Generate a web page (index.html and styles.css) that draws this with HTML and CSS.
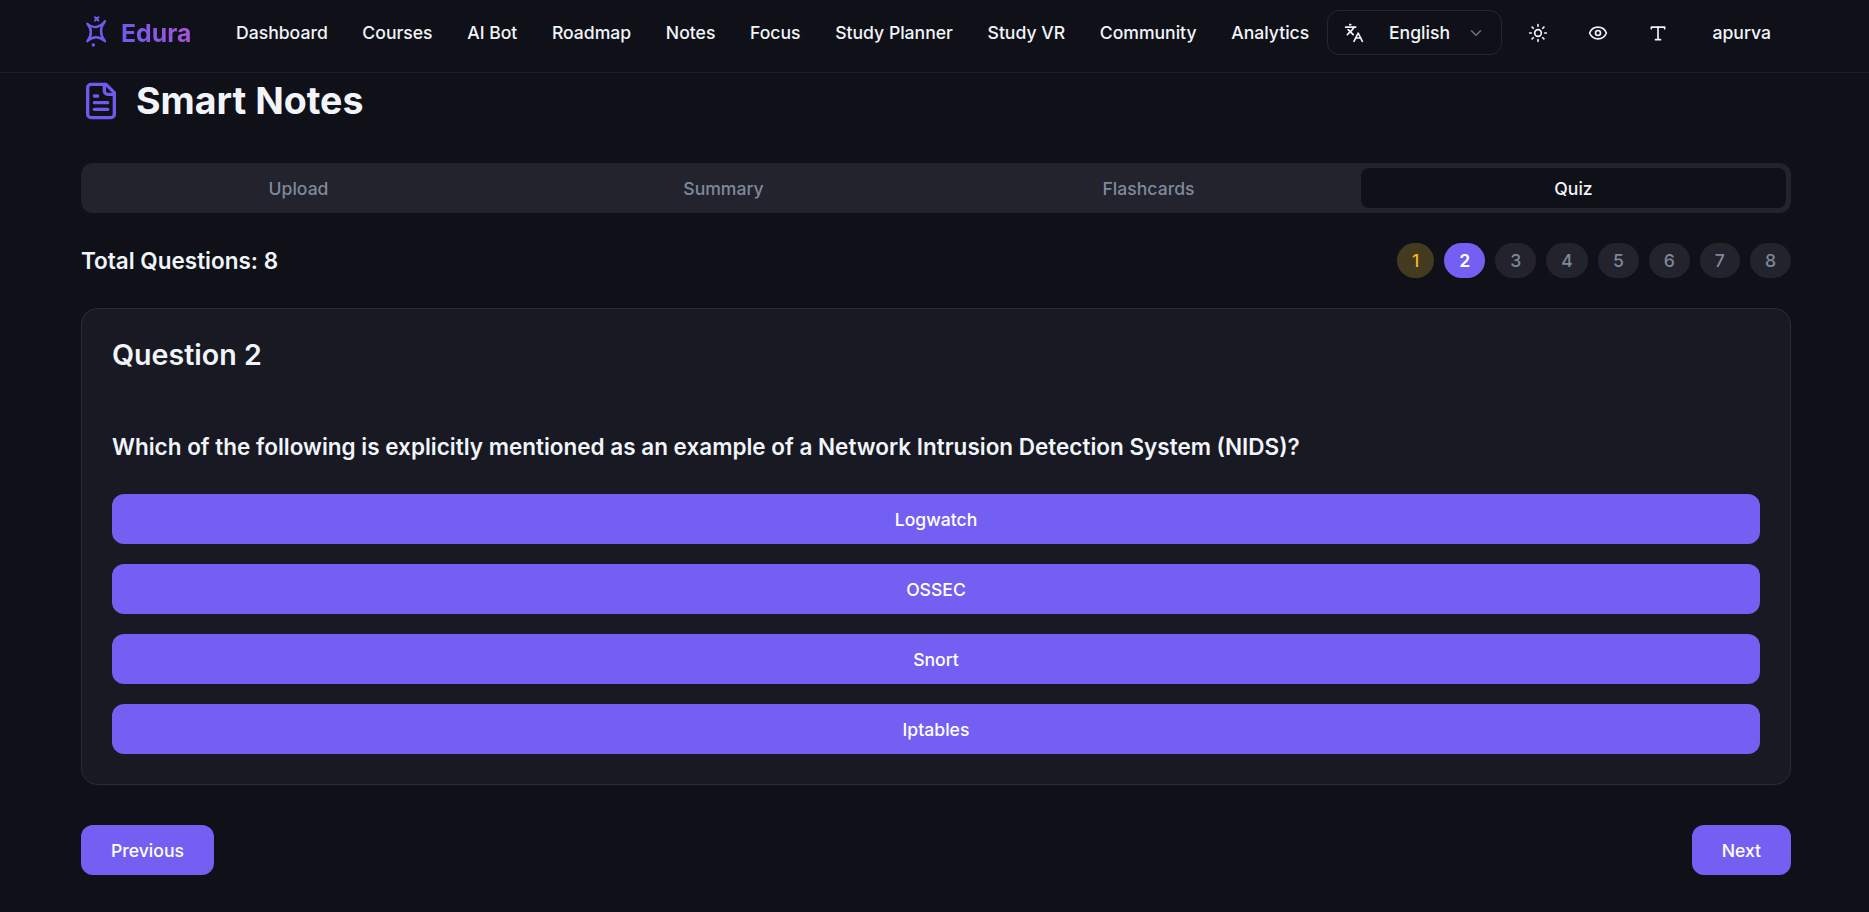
FILE: index.html
```html
<!DOCTYPE html>
<html lang="en">
<head>
<meta charset="utf-8">
<title>Smart Notes</title>
<link rel="stylesheet" href="styles.css">
</head>
<body>
<header class="nav">
  <div class="brand">
    <svg class="brand-icon" viewBox="0 0 24 34" width="24" height="34" fill="none" stroke="#6d5bf0" stroke-width="2.400" stroke-linecap="round" stroke-linejoin="round">
      <path d="M3.300 7.800 Q12 15.500 21 5.200 Q13 15 21 25.200 Q12 17.500 3.300 25.200 Q10.500 16 3.300 7.800 Z"/>
      <path d="M11 1.200 L14.400 4.600 M14.400 1.200 L11 4.600" stroke-width="2"/>
      <circle cx="9.300" cy="29" r="1.700" fill="#6d5bf0" stroke="none"/>
    </svg>
    <span class="brand-name">Edura</span>
  </div>
  <nav class="links">
    <a>Dashboard</a><a>Courses</a><a>AI Bot</a><a>Roadmap</a><a>Notes</a><a>Focus</a><a>Study Planner</a><a>Study VR</a><a>Community</a><a>Analytics</a>
  </nav>
  <div class="tools">
    <div class="lang">
      <svg viewBox="0 0 24 24" width="20" height="20" fill="none" stroke="#f1f5f9" stroke-width="2" stroke-linecap="round" stroke-linejoin="round"><path d="m5 8 6 6"/><path d="m4 14 6-6 2-3"/><path d="M2 5h12"/><path d="M7 2h1"/><path d="m22 22-5-10-5 10"/><path d="M14 18h6"/></svg>
      <span class="lang-name">English</span>
      <svg viewBox="0 0 24 24" width="18" height="18" fill="none" stroke="#6b7280" stroke-width="2" stroke-linecap="round" stroke-linejoin="round"><path d="m6 9 6 6 6-6"/></svg>
    </div>
    <button class="tool">
      <svg viewBox="0 0 24 24" width="20" height="20" fill="none" stroke="#f1f5f9" stroke-width="2" stroke-linecap="round" stroke-linejoin="round"><circle cx="12" cy="12" r="4"/><path d="M12 2v2"/><path d="M12 20v2"/><path d="m4.930 4.930 1.410 1.410"/><path d="m17.660 17.660 1.410 1.410"/><path d="M2 12h2"/><path d="M20 12h2"/><path d="m6.340 17.660-1.410 1.410"/><path d="m19.070 4.930-1.410 1.410"/></svg>
    </button>
    <button class="tool">
      <svg viewBox="0 0 24 24" width="20" height="20" fill="none" stroke="#f1f5f9" stroke-width="2" stroke-linecap="round" stroke-linejoin="round"><path d="M2.060 12.350a1 1 0 0 1 0-.7 10.750 10.750 0 0 1 19.880 0 1 1 0 0 1 0 .7 10.750 10.750 0 0 1-19.880 0"/><circle cx="12" cy="12" r="3"/></svg>
    </button>
    <button class="tool">
      <svg viewBox="0 0 24 24" width="20" height="20" fill="none" stroke="#f1f5f9" stroke-width="2" stroke-linecap="round" stroke-linejoin="round"><path d="M4 7V5h16v2"/><path d="M12 5v14"/><path d="M9 20h6"/></svg>
    </button>
    <span class="user">apurva</span>
  </div>
</header>
<main class="page">
  <div class="title-row">
    <svg viewBox="0 0 24 24" width="40" height="40" fill="none" stroke="#6d5bf0" stroke-width="2" stroke-linecap="round" stroke-linejoin="round"><path d="M15 2H6a2 2 0 0 0-2 2v16a2 2 0 0 0 2 2h12a2 2 0 0 0 2-2V7Z"/><path d="M14 2v4a2 2 0 0 0 2 2h4"/><path d="M10 9H8"/><path d="M16 13H8"/><path d="M16 17H8"/></svg>
    <h1>Smart Notes</h1>
  </div>
  <div class="tabs">
    <div class="tab">Upload</div>
    <div class="tab">Summary</div>
    <div class="tab">Flashcards</div>
    <div class="tab active">Quiz</div>
  </div>
  <div class="progress">
    <div class="total">Total Questions: 8</div>
    <div class="pills">
      <span class="pill answered">1</span>
      <span class="pill current">2</span>
      <span class="pill">3</span>
      <span class="pill">4</span>
      <span class="pill">5</span>
      <span class="pill">6</span>
      <span class="pill">7</span>
      <span class="pill">8</span>
    </div>
  </div>
  <section class="card">
    <h2>Question 2</h2>
    <p class="question">Which of the following is explicitly mentioned as an example of a Network Intrusion Detection System (NIDS)?</p>
    <div class="options">
      <button class="btn option">Logwatch</button>
      <button class="btn option">OSSEC</button>
      <button class="btn option">Snort</button>
      <button class="btn option">Iptables</button>
    </div>
  </section>
  <div class="pager">
    <button class="btn step">Previous</button>
    <button class="btn step">Next</button>
  </div>
</main>
</body>
</html>
```
FILE: styles.css
```css
* { box-sizing: border-box; }
html, body { margin: 0; padding: 0; }
body {
  width: 1869px;
  height: 912px;
  overflow: hidden;
  background: #0f1018;
  color: #f1f5f9;
  font-family: Inter, "Liberation Sans", sans-serif;
}
.nav {
  height: 73px;
  padding: 0 98px 7px 84px;
  display: flex;
  align-items: center;
  border-bottom: 1px solid #1c1d28;
}
.brand { display: flex; align-items: center; gap: 13px; width: 152px; flex: none; }
.brand-icon { flex: none; }
.brand-name {
  font-size: 24.800px;
  font-weight: 700;
  line-height: 32px;
  background: linear-gradient(90deg, #6d5bf0, #a855d8);
  -webkit-background-clip: text;
  background-clip: text;
  color: transparent;
}
.links { display: flex; gap: 34.600px; flex: none; font-size: 17.600px; font-weight: 500; color: #f1f5f9; }
.links a { display: block; line-height: 24px; white-space: nowrap; }
.tools { display: flex; align-items: center; margin-left: auto; }
.lang {
  width: 175px;
  height: 45px;
  padding: 0 16px;
  display: flex;
  align-items: center;
  border: 1px solid #262733;
  border-radius: 12px;
  font-size: 17.600px;
  font-weight: 500;
}
.lang-name { flex: 1; padding-left: 25px; }
.tool {
  width: 60px;
  height: 40px;
  padding: 0;
  display: flex;
  align-items: center;
  justify-content: center;
  background: none;
  border: 0;
}
.tool:first-of-type { margin-left: 6px; }
.user { width: 60px; margin-left: 23px; font-size: 17.600px; font-weight: 500; text-align: right; }
.page { padding: 0 78px 0 81px; }
.title-row { display: flex; align-items: center; gap: 15px; height: 50px; margin-top: 3px; }
.title-row svg { flex: none; }
h1 { margin: 0; font-size: 37.500px; line-height: 40px; font-weight: 700; color: #f1f5f9; }
.tabs {
  margin-top: 37px;
  height: 50px;
  padding: 5px;
  display: grid;
  grid-template-columns: repeat(4, 1fr);
  background: #22232c;
  border-radius: 12px;
}
.tab {
  display: flex;
  align-items: center;
  justify-content: center;
  border-radius: 8px;
  font-size: 17.600px;
  font-weight: 500;
  color: #7f899c;
}
.tab.active { background: #0f1018; color: #f1f5f9; }
.progress { margin-top: 30px; height: 35px; display: flex; align-items: center; justify-content: space-between; }
.total { font-size: 22.500px; font-weight: 600; line-height: 28px; color: #f1f5f9; }
.pills { display: flex; gap: 10px; }
.pill {
  height: 35px;
  padding: 0 15px;
  display: flex;
  align-items: center;
  justify-content: center;
  border-radius: 999px;
  background: #22232c;
  color: #7f899c;
  font-size: 17.600px;
  font-weight: 500;
}
.pill.answered { background: #433a20; color: #f5b81e; }
.pill.current { background: #7360f2; color: #fff; font-weight: 600; }
.card {
  margin-top: 30px;
  height: 477px;
  padding: 28px 30px 30px;
  background: #181923;
  border: 1px solid #2a2b38;
  border-radius: 16px;
}
h2 { margin: 0; font-size: 28.600px; line-height: 36px; font-weight: 600; color: #f1f5f9; }
.question { margin: 58px 0 0; font-size: 22.500px; line-height: 32px; font-weight: 600; color: #f1f5f9; white-space: nowrap; }
.options { margin-top: 31px; display: flex; flex-direction: column; gap: 20px; }
.btn {
  height: 50px;
  padding: 0 30px;
  background: #7360f2;
  color: #fff;
  border: 0;
  border-radius: 12px;
  font-family: inherit;
  font-size: 17.600px;
  font-weight: 500;
}
.option { width: 100%; }
.pager { margin-top: 40px; display: flex; justify-content: space-between; }
```
